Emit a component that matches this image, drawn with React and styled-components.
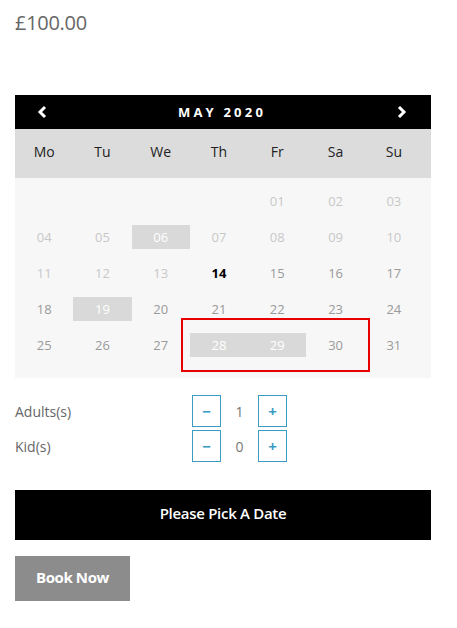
import React, { useState } from "react";
import styled, { createGlobalStyle } from "styled-components";

const GlobalStyle = createGlobalStyle`
  body {
    margin: 0;
    background: #fff;
    font-family: "Open Sans", "Noto Sans", sans-serif;
  }
`;

const Page = styled.div`
  width: 416px;
  padding: 8px 15px 0;
`;

const Price = styled.div`
  font-size: 20px;
  color: #666;
  height: 30px;
  line-height: 30px;
  letter-spacing: -0.3px;
`;

const Calendar = styled.div`
  margin-top: 57px;
  position: relative;
`;

const MonthBar = styled.div`
  height: 34px;
  background: #000;
  color: #fff;
  display: flex;
  align-items: center;
  justify-content: space-between;
  padding: 0 24px 0 22px;
`;

const MonthTitle = styled.div`
  font-size: 13px;
  font-weight: 700;
  letter-spacing: 3.2px;
`;

const Arrow = styled.button`
  border: 0;
  background: none;
  padding: 0;
  width: 12px;
  height: 14px;
  display: flex;
  cursor: pointer;
`;

const Week = styled.div`
  display: grid;
  grid-template-columns: repeat(7, 1fr);
  padding: 0 8px 4px 0;
  background: #dcdcdc;
  height: 49px;
  box-sizing: border-box;
  align-items: center;
`;

const WeekDay = styled.div`
  text-align: center;
  font-size: 14px;
  color: #222;
`;

const Days = styled.div`
  display: grid;
  grid-template-columns: repeat(7, 1fr);
  grid-auto-rows: 36px;
  padding: 5px 8px 15px 0;
  background: #f7f7f7;
`;

const Day = styled.div`
  display: flex;
  align-items: center;
  justify-content: center;
  font-size: 13px;
  color: ${(p) => (p.$today ? "#000" : p.$past ? "#c8c8c8" : "#9a9a9a")};
  font-weight: ${(p) => (p.$today ? 700 : 500)};
  span {
    width: 100%;
    height: 24px;
    line-height: 24px;
    text-align: center;
    background: ${(p) => (p.$busy ? "#d9d9d9" : "transparent")};
    color: ${(p) => (p.$busy ? "#fff" : "inherit")};
  }
`;

const Selection = styled.div`
  position: absolute;
  left: 166px;
  top: 223px;
  width: 185px;
  height: 50px;
  border: 2px solid #e60000;
  pointer-events: none;
`;

const Guests = styled.div`
  margin-top: 17px;
  display: flex;
  flex-direction: column;
  gap: 3px;
`;

const GuestRow = styled.div`
  display: flex;
  align-items: center;
  height: 32px;
`;

const GuestLabel = styled.div`
  width: 177px;
  font-size: 14px;
  color: #666;
`;

const StepButton = styled.button`
  width: 29px;
  height: 32px;
  box-sizing: border-box;
  border: 1.5px solid #3a9cc2;
  background: #fff;
  color: #3a9cc2;
  font-size: 15px;
  font-weight: 700;
  padding: 0;
  font-family: inherit;
  cursor: pointer;
`;

const Count = styled.div`
  width: 37px;
  text-align: center;
  font-size: 14px;
  color: #777;
`;

const PickButton = styled.button`
  display: block;
  width: 416px;
  height: 50px;
  margin-top: 28px;
  padding: 0 0 5px;
  border: 0;
  background: #000;
  color: #fff;
  font-family: inherit;
  font-size: 15px;
  font-weight: 600;
  letter-spacing: -0.3px;
`;

const BookButton = styled.button`
  display: block;
  width: 115px;
  height: 45px;
  margin-top: 16px;
  padding: 0 0 4px;
  border: 0;
  background: #8c8c8c;
  color: #fff;
  font-family: inherit;
  font-size: 15px;
  font-weight: 700;
  letter-spacing: -0.4px;
`;

const Chevron = ({ dir }) => (
  <svg width="12" height="14" viewBox="0 0 12 14">
    <polyline
      points={dir === "left" ? "8,2 3,7 8,12" : "4,2 9,7 4,12"}
      fill="none"
      stroke="#fff"
      strokeWidth="3"
    />
  </svg>
);

const weekdays = ["Mo", "Tu", "We", "Th", "Fr", "Sa", "Su"];
const busy = [6, 19, 28, 29];

const cells = [...Array(4).fill(null), ...Array.from({ length: 31 }, (_, i) => i + 1)];

export default function App() {
  const [adults, setAdults] = useState(1);
  const [kids, setKids] = useState(0);

  return (
    <>
      <GlobalStyle />
      <Page>
        <Price>£100.00</Price>
        <Calendar>
          <MonthBar>
            <Arrow aria-label="previous">
              <Chevron dir="left" />
            </Arrow>
            <MonthTitle>MAY 2020</MonthTitle>
            <Arrow aria-label="next">
              <Chevron dir="right" />
            </Arrow>
          </MonthBar>
          <Week>
            {weekdays.map((d) => (
              <WeekDay key={d}>{d}</WeekDay>
            ))}
          </Week>
          <Days>
            {cells.map((d, i) =>
              d ? (
                <Day key={i} $past={d < 14} $today={d === 14} $busy={busy.includes(d)}>
                  <span>{String(d).padStart(2, "0")}</span>
                </Day>
              ) : (
                <Day key={i} />
              )
            )}
          </Days>
          <Selection />
        </Calendar>
        <Guests>
          <GuestRow>
            <GuestLabel>Adults(s)</GuestLabel>
            <StepButton onClick={() => setAdults(Math.max(0, adults - 1))}>−</StepButton>
            <Count>{adults}</Count>
            <StepButton onClick={() => setAdults(adults + 1)}>+</StepButton>
          </GuestRow>
          <GuestRow>
            <GuestLabel>Kid(s)</GuestLabel>
            <StepButton onClick={() => setKids(Math.max(0, kids - 1))}>−</StepButton>
            <Count>{kids}</Count>
            <StepButton onClick={() => setKids(kids + 1)}>+</StepButton>
          </GuestRow>
        </Guests>
        <PickButton>Please Pick A Date</PickButton>
        <BookButton>Book Now</BookButton>
      </Page>
    </>
  );
}
